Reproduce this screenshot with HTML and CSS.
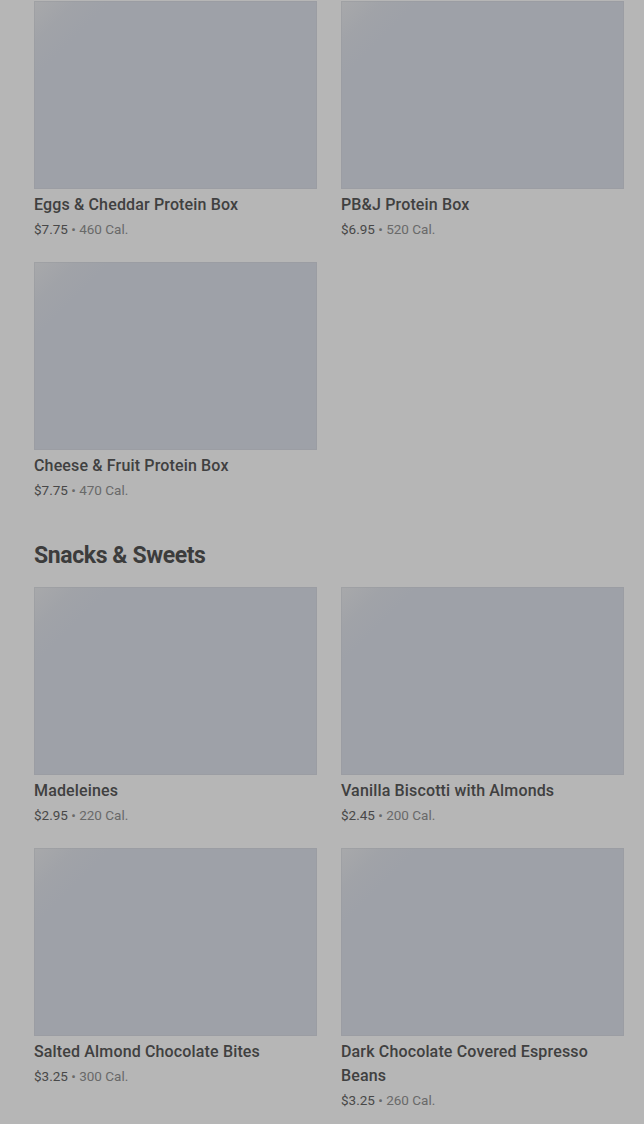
FILE: index.html
```html
<!DOCTYPE html>
<html lang="en">
<head>
<meta charset="utf-8">
<title>Menu</title>
<link rel="stylesheet" href="styles.css">
</head>
<body>
<main class="page">
  <section class="section">
    <div class="grid">
      <div class="card">
        <div class="thumb"></div>
        <div class="info">
          <div class="title">Eggs &amp; Cheddar Protein Box</div>
          <div class="meta"><span class="price">$7.75</span> • 460 Cal.</div>
        </div>
      </div>
      <div class="card">
        <div class="thumb"></div>
        <div class="info">
          <div class="title">PB&amp;J Protein Box</div>
          <div class="meta"><span class="price">$6.95</span> • 520 Cal.</div>
        </div>
      </div>
      <div class="card">
        <div class="thumb"></div>
        <div class="info">
          <div class="title">Cheese &amp; Fruit Protein Box</div>
          <div class="meta"><span class="price">$7.75</span> • 470 Cal.</div>
        </div>
      </div>
    </div>
  </section>
  <section class="section section-next">
    <h2 class="heading">Snacks &amp; Sweets</h2>
    <div class="grid">
      <div class="card">
        <div class="thumb"></div>
        <div class="info">
          <div class="title">Madeleines</div>
          <div class="meta"><span class="price">$2.95</span> • 220 Cal.</div>
        </div>
      </div>
      <div class="card">
        <div class="thumb"></div>
        <div class="info">
          <div class="title">Vanilla Biscotti with Almonds</div>
          <div class="meta"><span class="price">$2.45</span> • 200 Cal.</div>
        </div>
      </div>
      <div class="card">
        <div class="thumb"></div>
        <div class="info">
          <div class="title">Salted Almond Chocolate Bites</div>
          <div class="meta"><span class="price">$3.25</span> • 300 Cal.</div>
        </div>
      </div>
      <div class="card">
        <div class="thumb"></div>
        <div class="info">
          <div class="title">Dark Chocolate Covered Espresso Beans</div>
          <div class="meta"><span class="price">$3.25</span> • 260 Cal.</div>
        </div>
      </div>
    </div>
  </section>
</main>
</body>
</html>
```

FILE: styles.css
```css
* { box-sizing: border-box; }
html, body {
  margin: 0;
  padding: 0;
  background: #b6b6b6;
}
body {
  font-family: Roboto, "Liberation Sans", sans-serif;
  color: #3a3a3a;
  height: 1124px;
  overflow: hidden;
}
.page {
  padding: 1px 20px 0 34px;
}
.grid {
  display: grid;
  grid-template-columns: 283px 283px;
  column-gap: 24px;
  row-gap: 21px;
}
.section-next {
  margin-top: 38px;
}
.heading {
  margin: 0 0 15px;
  font-size: 23px;
  line-height: 32px;
  font-weight: 700;
  letter-spacing: -0.4px;
  color: #3c3c3c;
}
.thumb {
  height: 188px;
  background:
    linear-gradient(135deg, rgba(172,172,172,0.7) 0px, rgba(165,166,168,0.35) 30px, rgba(158,161,168,0) 55px),
    #9ea1a8;
  box-shadow: inset 0 0 0 1px rgba(152,154,158,0.5);
}
.info {
  padding-top: 4px;
}
.title {
  font-size: 16px;
  line-height: 24px;
  font-weight: 500;
  letter-spacing: 0.15px;
  color: #404040;
}
.meta {
  font-size: 13.5px;
  line-height: 24px;
  color: #696969;
}
.price {
  color: #484848;
}
```
